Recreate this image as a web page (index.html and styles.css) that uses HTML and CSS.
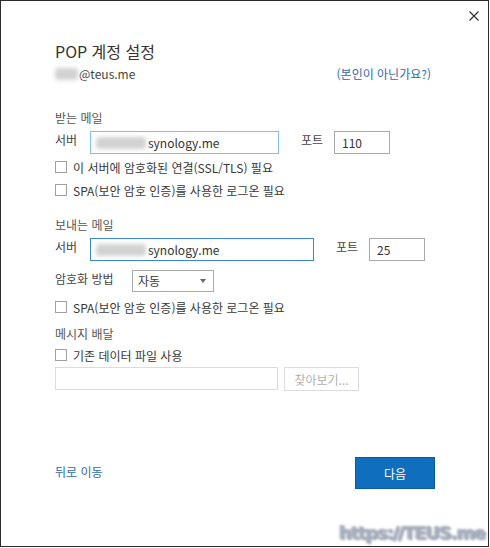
FILE: index.html
```html
<!DOCTYPE html>
<html lang="ko">
<head>
    <meta charset="UTF-8">
    <meta name="viewport" content="width=device-width, initial-scale=1.0">
    <title>POP 계정 설정</title>
    <link rel="stylesheet" href="styles.css">
</head>
<body>

<div class="dialog">
    <button class="close" aria-label="닫기">
        <svg width="10" height="10" viewBox="0 0 10 10"><path d="M0.5 0.5 L9.5 9.5 M9.5 0.5 L0.5 9.5" stroke="#2b2b2b" stroke-width="1.1" fill="none"/></svg>
    </button>

    <div class="content">
        <h2 class="title">POP 계정 설정</h2>
        <div class="account">
            <span><span class="blur mail-blur"></span>@teus.me</span>
            <a href="#" class="link">(본인이 아닌가요?)</a>
        </div>

        <div class="section-label first">받는 메일</div>
        <div class="server-row">
            <label class="field-label">서버</label>
            <div class="textbox focus-light server-in"><span class="blur host-blur"></span>synology.me</div>
            <label class="field-label port-label">포트</label>
            <div class="textbox port">110</div>
        </div>
        <label class="check first-check"><span class="box"></span>이 서버에 암호화된 연결(SSL/TLS) 필요</label>
        <label class="check"><span class="box"></span>SPA(보안 암호 인증)를 사용한 로그온 필요</label>

        <div class="section-label second">보내는 메일</div>
        <div class="server-row">
            <label class="field-label">서버</label>
            <div class="textbox focus server-out"><span class="blur host-blur"></span>synology.me</div>
            <label class="field-label port-label">포트</label>
            <div class="textbox port">25</div>
        </div>
        <div class="select-row">
            <label class="field-label wide">암호화 방법</label>
            <div class="select">자동<span class="arrow"></span></div>
        </div>
        <label class="check spa-check"><span class="box"></span>SPA(보안 암호 인증)를 사용한 로그온 필요</label>

        <div class="section-label third">메시지 배달</div>
        <label class="check data-check"><span class="box"></span>기존 데이터 파일 사용</label>
        <div class="file-row">
            <div class="textbox disabled file-in"></div>
            <button class="browse" disabled>찾아보기...</button>
        </div>

        <div class="footer">
            <a href="#" class="link">뒤로 이동</a>
            <button class="next">다음</button>
        </div>
    </div>

    <div class="watermark">https://TEUS.me</div>
</div>

</body>
</html>
```

FILE: styles.css
```css
body {
    margin: 0;
    background-color: white;
    font-family: "Noto Sans CJK KR", "Noto Sans", sans-serif;
    font-size: 12px;
    color: #383838;
}
.dialog {
    position: relative;
    width: 487px;
    height: 545px;
    border: 1px solid #2b2b2b;
    background-color: white;
    overflow: hidden;
}
.close {
    position: absolute;
    top: 9px;
    right: 8px;
    width: 12px;
    height: 12px;
    padding: 1px;
    border: none;
    background: none;
    line-height: 0;
}
.content {
    width: 376px;
    padding: 39px 0 0 54px;
}
.title {
    margin: 0;
    font-size: 16px;
    font-weight: normal;
    line-height: 22px;
    color: #333;
}
.account {
    display: flex;
    justify-content: space-between;
    margin-top: 3px;
    line-height: 18px;
    color: #444;
}
.link {
    color: #2f6aa8;
    text-decoration: none;
}
.blur {
    display: inline-block;
    height: 12px;
    vertical-align: -1px;
    background-color: #d2d2d2;
    border-radius: 3px;
    filter: blur(2px);
}
.mail-blur { width: 23px; margin-right: 1px; }
.host-blur { width: 50px; margin-right: 2px; }
.section-label {
    line-height: 18px;
    color: #555;
}
.section-label.first { margin-top: 26px; }
.section-label.second { margin-top: 17px; }
.section-label.third { margin-top: 9px; }
.server-row, .select-row, .file-row {
    display: flex;
    align-items: flex-start;
    margin-top: 4px;
}
.field-label {
    width: 35px;
    line-height: 18px;
    color: #444;
}
.field-label.wide { width: 77px; }
.port-label {
    width: 33px;
    margin-left: 22px;
}
.textbox {
    box-sizing: border-box;
    height: 23px;
    padding: 0 5px;
    border: 1px solid #a9a9a9;
    line-height: 21px;
    color: #333;
    white-space: nowrap;
    overflow: hidden;
}
.focus-light { border-color: #86bde6; }
.focus { border-color: #3a87c9; }
.server-in { width: 189px; }
.server-out { width: 224px; }
.port { width: 56px; padding-left: 7px; }
.select-row { margin-top: 9px; }
.select {
    position: relative;
    box-sizing: border-box;
    width: 82px;
    height: 22px;
    padding: 0 5px;
    border: 1px solid #a9a9a9;
    line-height: 20px;
}
.arrow {
    position: absolute;
    top: 8px;
    right: 7px;
    border-left: 3px solid transparent;
    border-right: 3px solid transparent;
    border-top: 4px solid #666;
}
.check {
    display: flex;
    align-items: center;
    height: 18px;
    margin-top: 5px;
    color: #383838;
}
.check.first-check { margin-top: 4px; }
.check.spa-check { margin-top: 6px; }
.check.data-check { margin-top: 3px; }
.box {
    box-sizing: border-box;
    width: 12px;
    height: 12px;
    margin-right: 6px;
    border: 1px solid #a0a0a0;
    background-color: white;
}
.file-row { margin-top: 3px; }
.disabled {
    width: 223px;
    border-color: #dcdcdc;
}
.browse {
    box-sizing: border-box;
    height: 24px;
    width: 75px;
    margin-left: 6px;
    padding: 0;
    border: 1px solid #dcdcdc;
    background-color: white;
    font-family: inherit;
    font-size: 12px;
    color: #b0b0b0;
}
.footer {
    display: flex;
    justify-content: space-between;
    align-items: center;
    width: 380px;
    margin-top: 66px;
}
.footer .link {
    margin-top: -3px;
}
.next {
    box-sizing: border-box;
    width: 80px;
    height: 32px;
    border: 1px solid #0b5aa0;
    background-color: #106ebe;
    color: white;
    font-family: inherit;
    font-size: 12px;
}
.watermark {
    position: absolute;
    right: 3px;
    bottom: 3px;
    font-family: "DejaVu Sans", sans-serif;
    font-weight: bold;
    font-size: 18px;
    letter-spacing: -1.2px;
    color: #a8afbd;
    text-shadow: 1px 1px 1px #8f97a8, -1px 0 1px #b9c0cc;
    filter: blur(0.8px);
}
```
